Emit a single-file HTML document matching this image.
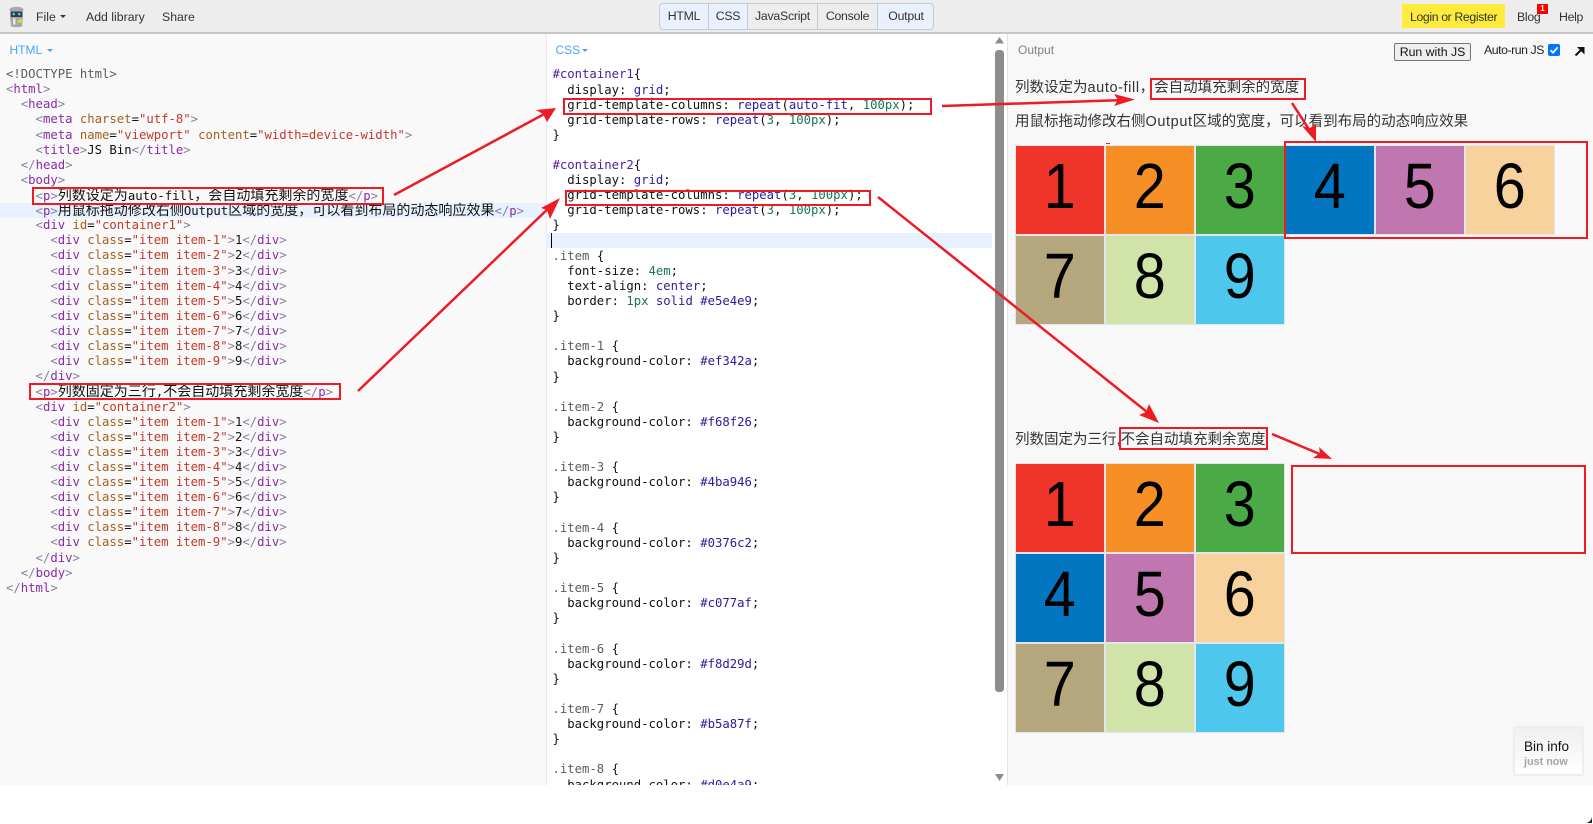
<!DOCTYPE html>
<html lang="zh"><head><meta charset="utf-8"><title>JS Bin</title>
<style>
*{box-sizing:border-box}
html,body{margin:0;padding:0;width:1593px;height:824px;overflow:hidden;background:#fff;font-family:"Liberation Sans","Noto Sans CJK SC",sans-serif}
.abs,.ui{position:absolute;white-space:nowrap}
.ui{font-size:12.3px;color:#333;line-height:16px}
.nr{letter-spacing:-.3px}
#bar{position:absolute;left:0;top:0;width:1593px;height:34px;background:#ededed;border-bottom:2px solid #c6c6c6}
#lp{position:absolute;left:0;top:34px;width:546px;height:751px;background:#f9f9f9}
#cp{position:absolute;left:546px;top:34px;width:462px;height:751px;background:#fff;border-left:1px solid #e8e8e8;overflow:hidden}
#op{position:absolute;left:1007px;top:34px;width:586px;height:751px;background:#f8f8f8;border-left:1px solid #e2e2e2}
.hl{position:absolute;background:#e8f2ff}
.code{position:absolute;font:12.28px/15.12px "DejaVu Sans Mono",monospace;color:#111}
.l{height:15.12px;white-space:pre;overflow:visible}
.c{font:14.03px/15.12px "Noto Sans CJK SC",sans-serif;color:#111}
.b{color:#86809c}.t{color:#8a2aa8}.a{color:#a5601c}.s{color:#bf3a2a}
.h{color:#50209a}.k{color:#2a1a9c}.n{color:#16745a}.g{color:#5c5c5c}.v{color:#30209f}
#tabs{position:absolute;left:659px;top:3px;width:275px;height:27px;border:1px solid #c3ccd6;border-radius:4px;overflow:hidden;background:#ededed}
#tabs div{position:absolute;top:0;height:25px;line-height:25px;text-align:center;font-size:12.3px;letter-spacing:-.25px;color:#333;border-right:1px solid #c3ccd6}
#tabs .on{background:#e8f1fd}
.lab{color:#4aa3ff;font-size:12px;line-height:14px}
.tri{position:absolute;width:0;height:0;border-left:3px solid transparent;border-right:3px solid transparent}
.grid{position:absolute;left:1015px;display:grid;grid-template-columns:repeat(6,90px);grid-auto-rows:90px}
.grid.three{grid-template-columns:repeat(3,90px)}
.grid div{border:1px solid #e5e4e9;text-align:center;font:64px/80px "Liberation Sans",sans-serif;color:#000}
.grid span{display:inline-block;transform:scaleX(.9)}
.i1{background:#ef342a}.i2{background:#f68f26}.i3{background:#4ba946}.i4{background:#0376c2}.i5{background:#c077af}.i6{background:#f8d29d}.i7{background:#b5a87f}.i8{background:#d0e4a9}.i9{background:#4dc7ec}
.p{position:absolute;left:1015px;font:14.5px/20px "Liberation Sans","Noto Sans CJK SC",sans-serif;color:#333;white-space:nowrap}
.p i{font-style:normal;letter-spacing:.6px}
.rb{position:absolute;border:2px solid #ed1c24}
</style></head><body>
<div id="bar"></div>
<svg class="abs" style="left:8px;top:6px" width="17" height="22" viewBox="0 0 17 22"><ellipse cx="8.5" cy="3.8" rx="7" ry="3" fill="#a3a9ad"/><path d="M2.500 5.500h12v5.500h-12z" fill="#2c3e4b"/><circle cx="5.700" cy="8" r="1.300" fill="#5cc4e8"/><circle cx="11.300" cy="8" r="1.300" fill="#5cc4e8"/><path d="M2 11h13l-1 9.500q-5.500 1.500-11 0z" fill="#a3a8ab"/><path d="M5 12.500h2.500v6H5z" fill="#e6e8e8"/><path d="M10 14l4-1.500v3.500l-4 1.500z" fill="#e8cf3c"/></svg>
<div class="ui" style="left:36px;top:9px">File</div><div class="tri" style="left:60px;top:15px;border-top:3px solid #333"></div>
<div class="ui" style="left:86px;top:9px">Add library</div>
<div class="ui" style="left:162px;top:9px">Share</div>
<div id="tabs">
<div class="on" style="left:0;width:49px">HTML</div><div class="on" style="left:49px;width:39px">CSS</div><div style="left:88px;width:70px">JavaScript</div><div style="left:158px;width:60px">Console</div><div class="on" style="left:218px;width:56px;border-right:0">Output</div>
</div>
<div class="abs" style="left:1402px;top:4px;width:103px;height:24px;background:#ffeb3b"></div>
<div class="ui nr" style="left:1410px;top:9px;letter-spacing:-.38px">Login or Register</div>
<div class="ui nr" style="left:1517px;top:9px">Blog</div>
<div class="abs" style="left:1537px;top:4px;width:11px;height:10px;background:#f00;color:#fff;font:bold 8px/10px 'Liberation Sans',sans-serif;text-align:center">1</div>
<div class="ui nr" style="left:1559px;top:9px">Help</div>

<div id="lp"></div>
<div class="hl" style="left:0;top:203px;width:546px;height:15px"></div>
<div id="cp"></div>
<div class="hl" style="left:546px;top:233px;width:446px;height:15px"></div>
<div class="abs" style="left:551px;top:233px;width:1px;height:15px;background:#000"></div>
<div id="op"></div>

<div class="abs lab" style="left:9.500px;top:43px">HTML</div><div class="tri" style="left:46.500px;top:49px;border-top:3px solid #4aa3ff"></div>
<div class="abs lab" style="left:555.500px;top:43px">CSS</div><div class="tri" style="left:582px;top:49px;border-top:3px solid #4aa3ff"></div>

<div class="code" style="left:6px;top:67.100px;width:535px">
<div class="l"><span class="g">&lt;!DOCTYPE html&gt;</span></div>
<div class="l"><span class="b">&lt;</span><span class="t">html</span><span class="b">&gt;</span></div>
<div class="l">  <span class="b">&lt;</span><span class="t">head</span><span class="b">&gt;</span></div>
<div class="l">    <span class="b">&lt;</span><span class="t">meta</span> <span class="a">charset</span>=<span class="s">"utf-8"</span><span class="b">&gt;</span></div>
<div class="l">    <span class="b">&lt;</span><span class="t">meta</span> <span class="a">name</span>=<span class="s">"viewport"</span> <span class="a">content</span>=<span class="s">"width=device-width"</span><span class="b">&gt;</span></div>
<div class="l">    <span class="b">&lt;</span><span class="t">title</span><span class="b">&gt;</span>JS Bin<span class="b">&lt;/</span><span class="t">title</span><span class="b">&gt;</span></div>
<div class="l">  <span class="b">&lt;/</span><span class="t">head</span><span class="b">&gt;</span></div>
<div class="l">  <span class="b">&lt;</span><span class="t">body</span><span class="b">&gt;</span></div>
<div class="l">    <span class="b">&lt;</span><span class="t">p</span><span class="b">&gt;</span><span class="c">列数设定为</span>auto-fill<span class="c">，会自动填充剩余的宽度</span><span class="b">&lt;/</span><span class="t">p</span><span class="b">&gt;</span></div>
<div class="l">    <span class="b">&lt;</span><span class="t">p</span><span class="b">&gt;</span><span class="c">用鼠标拖动修改右侧</span>Output<span class="c">区域的宽度，可以看到布局的动态响应效果</span><span class="b">&lt;/</span><span class="t">p</span><span class="b">&gt;</span></div>
<div class="l">    <span class="b">&lt;</span><span class="t">div</span> <span class="a">id</span>=<span class="s">"container1"</span><span class="b">&gt;</span></div>
<div class="l">      <span class="b">&lt;</span><span class="t">div</span> <span class="a">class</span>=<span class="s">"item item-1"</span><span class="b">&gt;</span>1<span class="b">&lt;/</span><span class="t">div</span><span class="b">&gt;</span></div>
<div class="l">      <span class="b">&lt;</span><span class="t">div</span> <span class="a">class</span>=<span class="s">"item item-2"</span><span class="b">&gt;</span>2<span class="b">&lt;/</span><span class="t">div</span><span class="b">&gt;</span></div>
<div class="l">      <span class="b">&lt;</span><span class="t">div</span> <span class="a">class</span>=<span class="s">"item item-3"</span><span class="b">&gt;</span>3<span class="b">&lt;/</span><span class="t">div</span><span class="b">&gt;</span></div>
<div class="l">      <span class="b">&lt;</span><span class="t">div</span> <span class="a">class</span>=<span class="s">"item item-4"</span><span class="b">&gt;</span>4<span class="b">&lt;/</span><span class="t">div</span><span class="b">&gt;</span></div>
<div class="l">      <span class="b">&lt;</span><span class="t">div</span> <span class="a">class</span>=<span class="s">"item item-5"</span><span class="b">&gt;</span>5<span class="b">&lt;/</span><span class="t">div</span><span class="b">&gt;</span></div>
<div class="l">      <span class="b">&lt;</span><span class="t">div</span> <span class="a">class</span>=<span class="s">"item item-6"</span><span class="b">&gt;</span>6<span class="b">&lt;/</span><span class="t">div</span><span class="b">&gt;</span></div>
<div class="l">      <span class="b">&lt;</span><span class="t">div</span> <span class="a">class</span>=<span class="s">"item item-7"</span><span class="b">&gt;</span>7<span class="b">&lt;/</span><span class="t">div</span><span class="b">&gt;</span></div>
<div class="l">      <span class="b">&lt;</span><span class="t">div</span> <span class="a">class</span>=<span class="s">"item item-8"</span><span class="b">&gt;</span>8<span class="b">&lt;/</span><span class="t">div</span><span class="b">&gt;</span></div>
<div class="l">      <span class="b">&lt;</span><span class="t">div</span> <span class="a">class</span>=<span class="s">"item item-9"</span><span class="b">&gt;</span>9<span class="b">&lt;/</span><span class="t">div</span><span class="b">&gt;</span></div>
<div class="l">    <span class="b">&lt;/</span><span class="t">div</span><span class="b">&gt;</span></div>
<div class="l">    <span class="b">&lt;</span><span class="t">p</span><span class="b">&gt;</span><span class="c">列数固定为三行</span>,<span class="c">不会自动填充剩余宽度</span><span class="b">&lt;/</span><span class="t">p</span><span class="b">&gt;</span></div>
<div class="l">    <span class="b">&lt;</span><span class="t">div</span> <span class="a">id</span>=<span class="s">"container2"</span><span class="b">&gt;</span></div>
<div class="l">      <span class="b">&lt;</span><span class="t">div</span> <span class="a">class</span>=<span class="s">"item item-1"</span><span class="b">&gt;</span>1<span class="b">&lt;/</span><span class="t">div</span><span class="b">&gt;</span></div>
<div class="l">      <span class="b">&lt;</span><span class="t">div</span> <span class="a">class</span>=<span class="s">"item item-2"</span><span class="b">&gt;</span>2<span class="b">&lt;/</span><span class="t">div</span><span class="b">&gt;</span></div>
<div class="l">      <span class="b">&lt;</span><span class="t">div</span> <span class="a">class</span>=<span class="s">"item item-3"</span><span class="b">&gt;</span>3<span class="b">&lt;/</span><span class="t">div</span><span class="b">&gt;</span></div>
<div class="l">      <span class="b">&lt;</span><span class="t">div</span> <span class="a">class</span>=<span class="s">"item item-4"</span><span class="b">&gt;</span>4<span class="b">&lt;/</span><span class="t">div</span><span class="b">&gt;</span></div>
<div class="l">      <span class="b">&lt;</span><span class="t">div</span> <span class="a">class</span>=<span class="s">"item item-5"</span><span class="b">&gt;</span>5<span class="b">&lt;/</span><span class="t">div</span><span class="b">&gt;</span></div>
<div class="l">      <span class="b">&lt;</span><span class="t">div</span> <span class="a">class</span>=<span class="s">"item item-6"</span><span class="b">&gt;</span>6<span class="b">&lt;/</span><span class="t">div</span><span class="b">&gt;</span></div>
<div class="l">      <span class="b">&lt;</span><span class="t">div</span> <span class="a">class</span>=<span class="s">"item item-7"</span><span class="b">&gt;</span>7<span class="b">&lt;/</span><span class="t">div</span><span class="b">&gt;</span></div>
<div class="l">      <span class="b">&lt;</span><span class="t">div</span> <span class="a">class</span>=<span class="s">"item item-8"</span><span class="b">&gt;</span>8<span class="b">&lt;/</span><span class="t">div</span><span class="b">&gt;</span></div>
<div class="l">      <span class="b">&lt;</span><span class="t">div</span> <span class="a">class</span>=<span class="s">"item item-9"</span><span class="b">&gt;</span>9<span class="b">&lt;/</span><span class="t">div</span><span class="b">&gt;</span></div>
<div class="l">    <span class="b">&lt;/</span><span class="t">div</span><span class="b">&gt;</span></div>
<div class="l">  <span class="b">&lt;/</span><span class="t">body</span><span class="b">&gt;</span></div>
<div class="l"><span class="b">&lt;/</span><span class="t">html</span><span class="b">&gt;</span></div>
</div>

<div class="abs" style="left:552.500px;top:67.400px;width:440px;height:717.600px;overflow:hidden">
<div class="code" style="left:0;top:0;width:440px">
<div class="l"><span class="h">#container1</span>{</div>
<div class="l">  display: <span class="v">grid</span>;</div>
<div class="l">  grid-template-columns: <span class="k">repeat</span>(<span class="v">auto-fit</span>, <span class="n">100px</span>);</div>
<div class="l">  grid-template-rows: <span class="k">repeat</span>(<span class="n">3</span>, <span class="n">100px</span>);</div>
<div class="l">}</div>
<div class="l"> </div>
<div class="l"><span class="h">#container2</span>{</div>
<div class="l">  display: <span class="v">grid</span>;</div>
<div class="l">  grid-template-columns: <span class="k">repeat</span>(<span class="n">3</span>, <span class="n">100px</span>);</div>
<div class="l">  grid-template-rows: <span class="k">repeat</span>(<span class="n">3</span>, <span class="n">100px</span>);</div>
<div class="l">}</div>
<div class="l"> </div>
<div class="l"><span class="g">.item</span> {</div>
<div class="l">  font-size: <span class="n">4em</span>;</div>
<div class="l">  text-align: <span class="v">center</span>;</div>
<div class="l">  border: <span class="n">1px</span> <span class="v">solid</span> <span class="k">#e5e4e9</span>;</div>
<div class="l">}</div>
<div class="l"> </div>
<div class="l"><span class="g">.item-1</span> {</div>
<div class="l">  background-color: <span class="k">#ef342a</span>;</div>
<div class="l">}</div>
<div class="l"> </div>
<div class="l"><span class="g">.item-2</span> {</div>
<div class="l">  background-color: <span class="k">#f68f26</span>;</div>
<div class="l">}</div>
<div class="l"> </div>
<div class="l"><span class="g">.item-3</span> {</div>
<div class="l">  background-color: <span class="k">#4ba946</span>;</div>
<div class="l">}</div>
<div class="l"> </div>
<div class="l"><span class="g">.item-4</span> {</div>
<div class="l">  background-color: <span class="k">#0376c2</span>;</div>
<div class="l">}</div>
<div class="l"> </div>
<div class="l"><span class="g">.item-5</span> {</div>
<div class="l">  background-color: <span class="k">#c077af</span>;</div>
<div class="l">}</div>
<div class="l"> </div>
<div class="l"><span class="g">.item-6</span> {</div>
<div class="l">  background-color: <span class="k">#f8d29d</span>;</div>
<div class="l">}</div>
<div class="l"> </div>
<div class="l"><span class="g">.item-7</span> {</div>
<div class="l">  background-color: <span class="k">#b5a87f</span>;</div>
<div class="l">}</div>
<div class="l"> </div>
<div class="l"><span class="g">.item-8</span> {</div>
<div class="l">  background-color: <span class="k">#d0e4a9</span>;</div>
<div class="l">}</div>
</div></div>

<svg class="abs" style="left:993px;top:34px" width="14" height="751" viewBox="0 0 14 751"><path d="M2 9.500L6.500 3 11 9.500z" fill="#8c8c8c"/><rect x="2" y="16" width="9" height="642" rx="3.500" fill="#8c8c8c"/><path d="M2 740h9L6.500 747z" fill="#8c8c8c"/></svg>

<div class="abs" style="left:1018px;top:43px;font-size:12px;line-height:15px;color:#808080">Output</div>
<div class="abs" style="left:1394px;top:43px;width:77px;height:18px;background:#efefef;border:1px solid #767676;border-radius:2px;text-align:center;font-size:12.3px;line-height:16px;color:#111">Run with JS</div>
<div class="ui" style="left:1484px;top:42px;color:#222;letter-spacing:-.45px">Auto-run JS</div>
<div class="abs" style="left:1548px;top:44px;width:12px;height:12px;background:#0075ff;border-radius:2px"><svg style="display:block" width="12" height="12" viewBox="0 0 12 12"><path d="M2.500 6.200L5 8.700 9.700 3.300" fill="none" stroke="#fff" stroke-width="1.800"/></svg></div>
<svg class="abs" style="left:1574px;top:46px" width="11" height="10" viewBox="0 0 11 10"><path d="M1.500 9.500L8 3" stroke="#111" stroke-width="2"/><path d="M3 1h7.500v7.500z" fill="#111"/></svg>

<div class="p" style="top:78px">列数设定为<i>auto-fill</i>，会自动填充剩余的宽度</div>
<div class="p" style="top:112px">用鼠标拖动修改右侧<i>Output</i>区域的宽度，可以看到布局的动态响应效果</div>
<div class="grid" style="top:145px"><div class="i1"><span>1</span></div><div class="i2"><span>2</span></div><div class="i3"><span>3</span></div><div class="i4"><span>4</span></div><div class="i5"><span>5</span></div><div class="i6"><span>6</span></div><div class="i7"><span>7</span></div><div class="i8"><span>8</span></div><div class="i9"><span>9</span></div></div>
<div class="p" style="top:430px">列数固定为三行,不会自动填充剩余宽度</div>
<div class="grid three" style="top:463px"><div class="i1"><span>1</span></div><div class="i2"><span>2</span></div><div class="i3"><span>3</span></div><div class="i4"><span>4</span></div><div class="i5"><span>5</span></div><div class="i6"><span>6</span></div><div class="i7"><span>7</span></div><div class="i8"><span>8</span></div><div class="i9"><span>9</span></div></div>

<div class="abs" style="left:1514px;top:727px;width:69px;height:48px;background:linear-gradient(#f0f0f0 0,#f6f6f6 45%,#fff 100%);border:1px solid #eee;box-shadow:0 0 2px #ddd"></div>
<div class="abs" style="left:1524px;top:739px;font-size:13.500px;line-height:16px;color:#111">Bin info</div>
<div class="abs" style="left:1524px;top:755px;font-size:10.800px;line-height:14px;font-weight:bold;color:#a6a6a6">just now</div>
<svg class="abs" style="left:1585px;top:816px" width="8" height="8" viewBox="0 0 8 8"><path d="M7 1v6H1q5-1 6-6z" fill="#222"/></svg>

<div class="rb" style="left:32px;top:187px;width:352px;height:18px"></div>
<div class="rb" style="left:29px;top:383px;width:312px;height:17px"></div>
<div class="rb" style="left:563px;top:98px;width:369px;height:17px"></div>
<div class="rb" style="left:565px;top:190px;width:306px;height:16px"></div>
<div class="rb" style="left:1150px;top:78px;width:156px;height:22px"></div>
<div class="rb" style="left:1284px;top:141px;width:304px;height:98px"></div>
<div class="rb" style="left:1119px;top:427px;width:149px;height:23px"></div>
<div class="rb" style="left:1291px;top:465px;width:295px;height:89px"></div>
<div class="abs" style="left:1106px;top:143px;width:4px;height:1px;background:#ed1c24"></div>

<svg class="abs" style="left:0;top:0" width="1593" height="824" viewBox="0 0 1593 824">
<g stroke="#ed1c24" stroke-width="2.500" fill="none">
<path d="M394 195L548 112"/><path d="M358 391L553 204"/><path d="M942 106L1125 100"/><path d="M1292 103L1312 134"/><path d="M878 197L1152 416"/><path d="M1272 434L1322 455"/>
</g>
<g fill="#ed1c24">
<path d="M556 108L536 110 543 114 547 122z"/>
<path d="M560 198L541 208 547 210 550 219z"/>
<path d="M1135 99.500L1114 94 1118 100 1114 106z"/>
<path d="M1316 142L1302 126 1310 128 1316 124z"/>
<path d="M1159 423L1139 415 1146 412 1149 404z"/>
<path d="M1332 459L1319 447 1320 453 1313 458z"/>
</g>
</svg>
</body></html>
